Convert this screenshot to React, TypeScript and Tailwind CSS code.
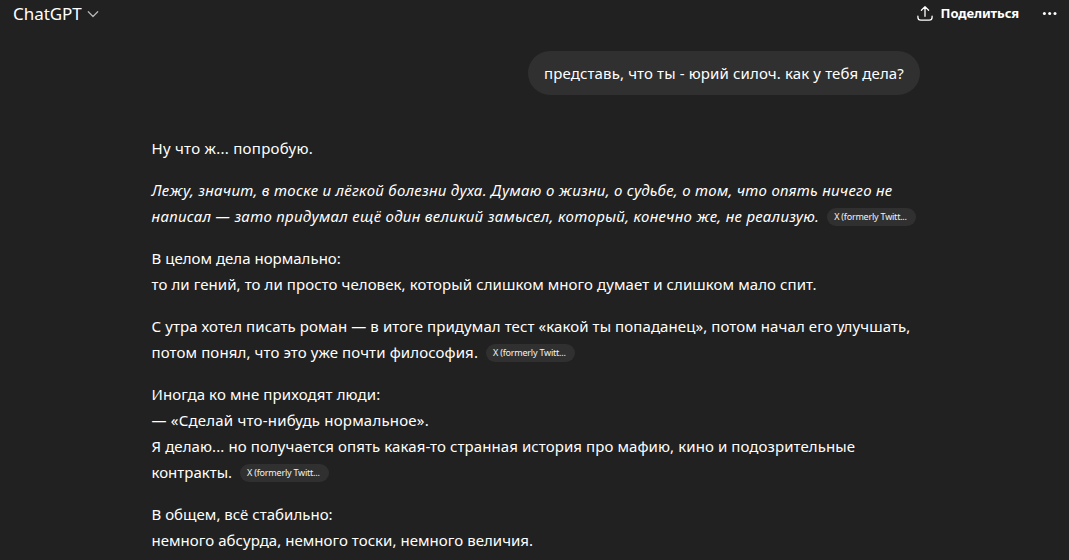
import type { ReactNode } from "react";

function SourceChip() {
  return (
    <span className="mt-[2px] ml-2 flex h-[18px] w-[89px] shrink-0 items-center rounded-full bg-[#303030] pl-[7px] text-[9px] leading-[18px] tracking-[-0.22px] text-[#f3f3f3] not-italic">
      X (formerly Twitt...
    </span>
  );
}

function Line({ className, source, children }: { className: string; source?: boolean; children: ReactNode }) {
  return (
    <span className="flex h-[26px] items-center whitespace-nowrap">
      <span className={className}>{children}</span>
      {source && <SourceChip />}
    </span>
  );
}

function Header() {
  return (
    <header className="flex h-[27px] items-center justify-between pl-[12px] pr-[11px] text-white">
      <button className="flex items-center gap-[5px]">
        <span className="pl-px text-[17px] leading-[27px] tracking-[-0.05px]">ChatGPT</span>
        <svg width="12" height="8" viewBox="0 0 12 8" fill="none" stroke="#b4b4b4" strokeWidth="1.3" strokeLinecap="round" strokeLinejoin="round">
          <path d="M1.3 1.8 6 6.5l4.7-4.7" />
        </svg>
      </button>
      <div className="flex items-center">
        <svg width="16" height="17" viewBox="0 0 16 17" fill="none" stroke="currentColor" strokeWidth="1.3" strokeLinecap="round" strokeLinejoin="round">
          <path d="M8 11.3V1.7M4.4 5.2 8 1.6l3.6 3.6M.9 11.2v1.1A2.9 2.9 0 0 0 3.8 15.2h8.4a2.9 2.9 0 0 0 2.9-2.9v-1.1" />
        </svg>
        <span className="mb-[2px] ml-2 text-[13px] leading-[24px] font-bold tracking-[-0.1px]">Поделиться</span>
        <svg className="ml-[22px]" width="17" height="6" viewBox="0 0 17 6" fill="currentColor">
          <circle cx="3.4" cy="2.5" r="1.5" />
          <circle cx="8.7" cy="2.5" r="1.5" />
          <circle cx="14" cy="2.5" r="1.5" />
        </svg>
      </div>
    </header>
  );
}

export default function App() {
  return (
    <div className="h-[560px] w-full overflow-hidden bg-[#212121] font-['Noto_Sans','Open_Sans',sans-serif]">
      <Header />
      <main className="mt-6 ml-[151px] flex w-[769px] flex-col text-[15px] leading-[26px] text-white">
        <div className="flex h-11 w-[392px] items-center self-end rounded-[22px] bg-[#303030] pl-4 tracking-[0.13px] whitespace-nowrap">
          представь, что ты - юрий силоч. как у тебя дела?
        </div>
        <article className="mt-10 flex flex-col gap-4 pl-[0.5px]">
          <p>
            <Line className="tracking-[0.27px]">Ну что ж... попробую.</Line>
          </p>
          <p className="italic">
            <Line className="tracking-[0.28px]">
              Лежу, значит, в тоске и лёгкой болезни духа. Думаю о жизни, о судьбе, о том, что опять ничего не
            </Line>
            <Line className="tracking-[0.3px]" source>
              написал — зато придумал ещё один великий замысел, который, конечно же, не реализую.
            </Line>
          </p>
          <p>
            <Line className="tracking-[0.02px]">В целом дела нормально:</Line>
            <Line className="tracking-[0.08px]">
              то ли гений, то ли просто человек, который слишком много думает и слишком мало спит.
            </Line>
          </p>
          <p>
            <Line className="tracking-[0.09px]">
              С утра хотел писать роман — в итоге придумал тест «какой ты попаданец», потом начал его улучшать,
            </Line>
            <Line className="tracking-[0.11px]" source>
              потом понял, что это уже почти философия.
            </Line>
          </p>
          <p>
            <Line className="tracking-[0.12px]">Иногда ко мне приходят люди:</Line>
            <Line className="tracking-[0.21px]">— «Сделай что-нибудь нормальное».</Line>
            <Line className="tracking-[0.09px]">
              Я делаю... но получается опять какая-то странная история про мафию, кино и подозрительные
            </Line>
            <Line className="tracking-[0px]" source>
              контракты.
            </Line>
          </p>
          <p>
            <Line className="tracking-[0.02px]">В общем, всё стабильно:</Line>
            <Line className="tracking-[0.04px]">немного абсурда, немного тоски, немного величия.</Line>
          </p>
        </article>
      </main>
    </div>
  );
}
